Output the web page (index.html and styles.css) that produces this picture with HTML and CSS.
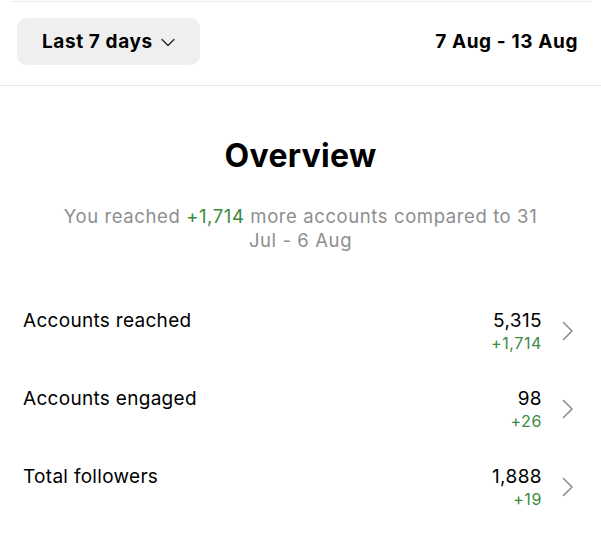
FILE: index.html
```html
<!DOCTYPE html>
<html lang="en">
<head>
<meta charset="UTF-8">
<meta name="viewport" content="width=device-width, initial-scale=1.0">
<title>Insights</title>
<link rel="stylesheet" href="styles.css">
</head>
<body>

<div class="page">
    <div class="top-rule"></div>

    <div class="range-bar">
        <button class="range-btn">
            Last 7 days
            <svg class="range-caret" width="14" height="9" viewBox="0 0 14 9">
                <path d="M1 1.5 L7 7.5 L13 1.5" fill="none" stroke="#222" stroke-width="1.3" stroke-linecap="round" stroke-linejoin="round"/>
            </svg>
        </button>
        <div class="range-dates">7 Aug - 13 Aug</div>
    </div>

    <div class="overview">
        <h2>Overview</h2>
        <p class="summary">You reached <span class="up">+1,714</span> more accounts compared to 31 Jul - 6 Aug</p>
    </div>

    <div class="stats">
        <div class="stat-row">
            <div class="stat-label">Accounts reached</div>
            <div class="stat-right">
                <div class="stat-values">
                    <div class="stat-num">5,315</div>
                    <div class="stat-diff">+1,714</div>
                </div>
                <svg class="stat-arrow" width="11" height="20" viewBox="0 0 11 20">
                    <path d="M1.5 1.5 L10 10 L1.5 18.5" fill="none" stroke="#8e8e8e" stroke-width="1.6" stroke-linecap="round" stroke-linejoin="round"/>
                </svg>
            </div>
        </div>
        <div class="stat-row">
            <div class="stat-label">Accounts engaged</div>
            <div class="stat-right">
                <div class="stat-values">
                    <div class="stat-num">98</div>
                    <div class="stat-diff">+26</div>
                </div>
                <svg class="stat-arrow" width="11" height="20" viewBox="0 0 11 20">
                    <path d="M1.5 1.5 L10 10 L1.5 18.5" fill="none" stroke="#8e8e8e" stroke-width="1.6" stroke-linecap="round" stroke-linejoin="round"/>
                </svg>
            </div>
        </div>
        <div class="stat-row">
            <div class="stat-label">Total followers</div>
            <div class="stat-right">
                <div class="stat-values">
                    <div class="stat-num">1,888</div>
                    <div class="stat-diff">+19</div>
                </div>
                <svg class="stat-arrow" width="11" height="20" viewBox="0 0 11 20">
                    <path d="M1.5 1.5 L10 10 L1.5 18.5" fill="none" stroke="#8e8e8e" stroke-width="1.6" stroke-linecap="round" stroke-linejoin="round"/>
                </svg>
            </div>
        </div>
    </div>
</div>

</body>
</html>
```

FILE: styles.css
```css
body {
    margin: 0;
    padding: 0;
    background-color: #fff;
    color: #000;
    font-family: Inter, "Noto Sans", sans-serif;
}

.page {
    width: 601px;
}

.top-rule {
    height: 1px;
    margin: 1px 10px 0 10px;
    background-color: #ececec;
}

.range-bar {
    display: flex;
    justify-content: space-between;
    align-items: center;
    padding: 16px 23px 20px 17px;
    border-bottom: 1px solid #e6e6e6;
}

.range-btn {
    display: flex;
    align-items: center;
    gap: 8px;
    width: 183px;
    height: 47px;
    padding: 0 0 0 25px;
    border: none;
    border-radius: 10px;
    background-color: #efefef;
    color: #000;
    font-family: inherit;
    font-size: 19px;
    font-weight: 700;
    letter-spacing: 0.6px;
}

.range-caret {
    margin-top: 1px;
}

.range-dates {
    font-size: 19px;
    font-weight: 700;
    letter-spacing: 0.6px;
}

.overview {
    text-align: center;
    padding: 0 55px;
}

.overview h2 {
    margin: 50px 0 0 0;
    font-size: 32px;
    font-weight: 700;
    line-height: 40px;
    letter-spacing: 0.3px;
}

.summary {
    margin: 28px 0 0 0;
    font-size: 18.5px;
    line-height: 24px;
    letter-spacing: 0.6px;
    color: #8e8e8e;
}

.up {
    color: #3b8a3e;
}

.stats {
    margin-top: 57px;
    padding: 0 28px 0 23px;
}

.stat-row {
    display: flex;
    align-items: flex-start;
    height: 78px;
}

.stat-label {
    flex: 1;
    font-size: 19px;
    line-height: 23px;
    letter-spacing: 0.3px;
}

.stat-right {
    display: flex;
    align-items: center;
    gap: 20px;
}

.stat-values {
    text-align: right;
}

.stat-num {
    font-size: 19px;
    line-height: 23px;
    letter-spacing: 0.4px;
}

.stat-diff {
    font-size: 16px;
    line-height: 23px;
    letter-spacing: 0.6px;
    color: #3b8a3e;
}

.stat-arrow {
    margin-top: -2px;
}
```
